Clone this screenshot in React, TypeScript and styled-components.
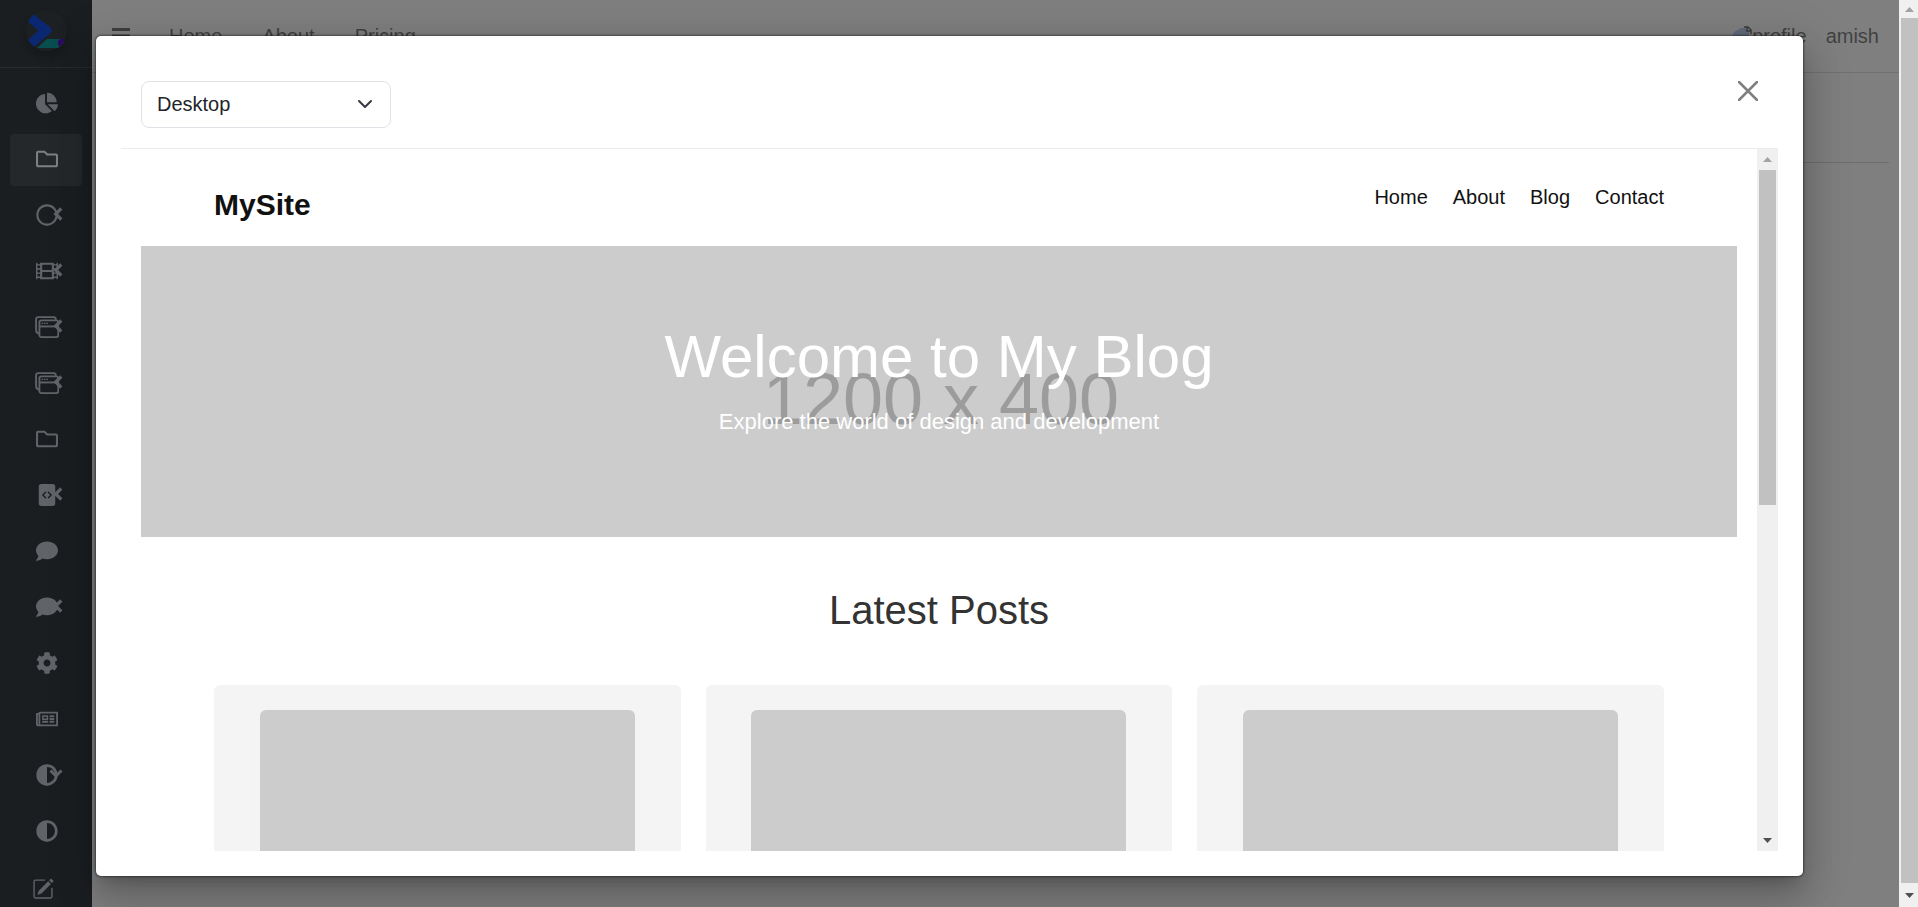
import React from "react";
import styled, { createGlobalStyle } from "styled-components";
import {
  FaAdjust,
  FaChartPie,
  FaCog,
  FaComment,
  FaFilm,
  FaRegCircle,
  FaRegFolder,
  FaRegNewspaper,
} from "react-icons/fa";
import { BsFileCodeFill, BsPencilSquare } from "react-icons/bs";

const GlobalStyle = createGlobalStyle`
  *, *::before, *::after { box-sizing: border-box; }
  body {
    margin: 0;
    background: #fff;
    color: #212529;
    font-family: "Liberation Sans", Arial, sans-serif;
    font-size: 20px;
    line-height: 30px;
  }
  h1, h2, p, ul { margin: 0; padding: 0; }
  ul { list-style: none; }
`;

const Screen = styled.div`
  display: flex;
  height: 100vh;
  overflow: hidden;
`;

const Page = styled.div`
  position: relative;
  display: flex;
  flex: 1;
  min-width: 0;
`;

const Sidebar = styled.aside`
  width: 92px;
  flex: none;
  overflow: hidden;
  background: #363d42;
`;

const Brand = styled.a`
  display: flex;
  align-items: center;
  justify-content: center;
  height: 68px;
  border-bottom: 1px solid #4b545c;
`;

const BrandDisc = styled.span`
  display: flex;
  width: 41px;
  height: 41px;
  margin-bottom: 6px;
  border-radius: 50%;
  background: #3a4045;
  box-shadow: 0 6px 12px rgba(0, 0, 0, 0.25);
`;

const SideList = styled.ul`
  display: flex;
  flex-direction: column;
  gap: 4px;
  padding: 10px;
`;

const SideLink = styled.a<{ $active?: boolean }>`
  position: relative;
  display: flex;
  align-items: center;
  justify-content: center;
  height: 52px;
  padding: 0 0 2px 2px;
  border-radius: 4px;
  color: ${(p) => (p.$active ? "#fff" : "#c2c7d0")};
  background: ${(p) => (p.$active ? "rgba(255, 255, 255, 0.1)" : "transparent")};
`;

const IconBox = styled.span`
  display: flex;

  svg {
    width: auto;
    height: 22px;
  }
`;

const Caret = styled.span`
  position: absolute;
  top: 17px;
  right: 19px;
  display: flex;
`;

const EditLink = styled.a`
  display: flex;
  justify-content: center;
  padding: 16px 6px 0 0;
  color: #c2c7d0;
`;

const Main = styled.main`
  flex: 1;
  min-width: 0;
`;

const TopBar = styled.nav`
  display: flex;
  align-items: center;
  height: 73px;
  padding: 0 20px;
  border-bottom: 1px solid #dee2e6;
  color: rgba(0, 0, 0, 0.5);
`;

const MenuButton = styled.button`
  display: flex;
  padding: 0;
  margin-right: 39px;
  border: 0;
  background: none;
  color: rgba(0, 0, 0, 0.5);
`;

const TopLinks = styled.div`
  display: flex;
  gap: 40px;
  flex: 1;
`;

const TopLink = styled.a`
  color: inherit;
  text-decoration: none;
`;

const Profile = styled.a`
  display: flex;
  align-items: center;
  color: inherit;
  text-decoration: none;
`;

const UserName = styled.span`
  margin-left: 19px;
`;

const PageRule = styled.hr`
  height: 1px;
  margin: 89px 10px 0;
  border: 0;
  background: #dcdcdc;
`;

const Backdrop = styled.div`
  position: absolute;
  inset: 0;
  display: flex;
  padding: 36px 96px 31px;
  background: rgba(0, 0, 0, 0.5);
`;

const Dialog = styled.section`
  display: flex;
  flex: 1;
  flex-direction: column;
  min-width: 0;
  padding: 25px;
  border-radius: 5px;
  background: #fff;
  box-shadow:
    0 11px 15px -7px rgba(0, 0, 0, 0.2),
    0 24px 38px 3px rgba(0, 0, 0, 0.14),
    0 9px 46px 8px rgba(0, 0, 0, 0.12),
    0 0 2px 1px rgba(0, 0, 0, 0.4);
`;

const DialogHeader = styled.header`
  display: flex;
  align-items: flex-start;
  justify-content: space-between;
  padding: 20px;
  border-bottom: 1px solid #e9ecef;
`;

const SelectWrap = styled.div`
  position: relative;
  width: 250px;
`;

const DeviceSelect = styled.select`
  display: block;
  width: 100%;
  height: 47px;
  padding: 0 45px 2px 15px;
  border: 1px solid #dee2e6;
  border-radius: 8px;
  appearance: none;
  background: #fff;
  color: #212529;
  font: inherit;
`;

const SelectArrow = styled.svg`
  position: absolute;
  top: 15px;
  right: 18px;
  width: 16px;
  height: 16px;
  pointer-events: none;
`;

const CloseButton = styled.button`
  display: flex;
  padding: 0;
  border: 0;
  background: none;
  color: #7f7f7f;
`;

const Preview = styled.div`
  display: flex;
  flex: 1;
  min-height: 0;
`;

const Site = styled.div`
  flex: 1;
  min-width: 0;
  overflow: hidden;
  padding: 0 20px;
`;

const SiteContainer = styled.div`
  max-width: 1450px;
  margin: 0 auto;
`;

const SiteHeader = styled(SiteContainer)`
  display: flex;
  align-items: flex-start;
  justify-content: space-between;
  height: 97px;
  padding-top: 33px;
  color: #111;
`;

const SiteLogo = styled.div`
  font-size: 30px;
  font-weight: 700;
  line-height: 46px;
`;

const SiteNav = styled.nav`
  display: flex;
  gap: 25px;
`;

const SiteLink = styled.a`
  color: #111;
  text-decoration: none;
`;

const Hero = styled.section`
  position: relative;
  height: 291px;
  padding-top: 75px;
  background: #ccc;
  color: #fff;
  text-align: center;
`;

const HeroImageLabel = styled.span`
  position: absolute;
  inset: 14px 0 0 4px;
  display: flex;
  align-items: center;
  justify-content: center;
  color: #9c9c9c;
  font-size: 72px;
`;

const HeroTitle = styled.h1`
  position: relative;
  margin-bottom: 12px;
  font-size: 60px;
  font-weight: 400;
  line-height: 72px;
`;

const HeroText = styled.p`
  position: relative;
  font-size: 22px;
  line-height: 34px;
`;

const PostsTitle = styled.h2`
  padding: 49px 0 51px;
  color: #333;
  font-size: 40px;
  font-weight: 400;
  line-height: 48px;
  text-align: center;
`;

const Posts = styled(SiteContainer)`
  display: grid;
  grid-template-columns: repeat(3, 1fr);
  gap: 25px;
`;

const PostCard = styled.article`
  height: 420px;
  padding: 25px;
  border-radius: 6px;
  background: #f4f4f4;
`;

const PostImage = styled.div`
  max-width: 375px;
  height: 250px;
  margin: 0 auto;
  border-radius: 6px;
  background: #ccc;
`;

const Track = styled.div<{ $width: number }>`
  display: flex;
  flex: none;
  flex-direction: column;
  width: ${(p) => p.$width}px;
  padding: 0 2px;
  background: #f0f0f0;
`;

const PageTrack = styled(Track)`
  padding-right: 0;
`;

const TrackEnd = styled.div<{ $height: number }>`
  display: flex;
  flex: none;
  align-items: center;
  justify-content: center;
  height: ${(p) => p.$height}px;
`;

const Thumb = styled.div<{ $share: number }>`
  flex: ${(p) => p.$share} 1 0;
  background: #c1c1c1;
`;

const TrackRest = styled.div<{ $share: number }>`
  flex: ${(p) => p.$share} 1 0;
`;

const UpArrow = () => (
  <svg width="9" height="5" viewBox="0 0 9 5" aria-hidden="true">
    <path d="M0 5 4.5 0 9 5Z" fill="#a3a3a3" />
  </svg>
);

const DownArrow = () => (
  <svg width="9" height="5" viewBox="0 0 9 5" aria-hidden="true">
    <path d="M0 0 4.5 5 9 0Z" fill="#505050" />
  </svg>
);

const Logo = () => (
  <svg width="41" height="41" viewBox="0 0 41 41" aria-hidden="true">
    <path
      d="M2 11.500 6.500 5Q7.500 4.300 8.500 5L24.500 17.500Q27 20.500 24.500 23L9 36Q7.500 36.800 6.500 35.500L2 30 12.500 20.500Z"
      fill="#1550e2"
    />
    <path d="M11 38 21 29H38.500Q38 33 35 35.500L32 38Z" fill="#119ba0" />
    <path d="M38.500 29Q38 33 33.500 36.500 31.500 35 31.700 32.500 32 29.500 34.500 29Z" fill="#5a10c0" />
  </svg>
);

const WindowStackIcon = () => (
  <svg width="22" height="20" viewBox="0 0 22 20" aria-hidden="true">
    <g fill="none" stroke="currentColor" strokeWidth="1.700" strokeLinejoin="round">
      <path d="M3.500 16Q1 15.500 1 13V3Q1 1 3 1H17Q19 1 19 3.500" />
      <rect x="4" y="4" width="17.200" height="15.200" rx="2" />
      <path d="M4 9.500H21" />
    </g>
    <path d="M6 6.700H12" stroke="currentColor" strokeWidth="1.200" strokeDasharray="1.400 0.800" />
  </svg>
);

const LeftCaret = () => (
  <svg width="10" height="14" viewBox="0 0 10 14" aria-hidden="true">
    <path d="M8.300 1.500 2.700 7 8.300 12.500" fill="none" stroke="currentColor" strokeWidth="3.200" />
  </svg>
);

const DownCaret = () => (
  <svg width="14" height="14" viewBox="0 0 14 14" aria-hidden="true">
    <path d="M1.500 3.500 7 9 12.500 3.500" fill="none" stroke="currentColor" strokeWidth="3" />
  </svg>
);

const BrokenImage = () => (
  <svg width="20" height="20" viewBox="0 0 20 20" aria-hidden="true">
    <path d="M0 11Q1 5 6 4 9 1 13 2L17 5V20H0Z" fill="#c3d4f5" />
    <path d="M12 1H16L19 4V8M15 1V5H19" fill="none" stroke="#777" strokeWidth="1.500" />
    <path d="M3 15Q9 5 15 14V20H3Z" fill="#379e1f" />
  </svg>
);

type SideItem = {
  label: string;
  icon: React.ComponentType;
  caret?: "left" | "down";
  active?: boolean;
};

const sideItems: SideItem[] = [
  { label: "Dashboard", icon: FaChartPie },
  { label: "Projects", icon: FaRegFolder, active: true },
  { label: "Elements", icon: FaRegCircle, caret: "left" },
  { label: "Media", icon: FaFilm, caret: "left" },
  { label: "Pages", icon: WindowStackIcon, caret: "left" },
  { label: "Templates", icon: WindowStackIcon, caret: "left" },
  { label: "Files", icon: FaRegFolder },
  { label: "Code", icon: BsFileCodeFill, caret: "left" },
  { label: "Messages", icon: FaComment },
  { label: "Comments", icon: FaComment, caret: "left" },
  { label: "Settings", icon: FaCog },
  { label: "News", icon: FaRegNewspaper },
  { label: "Themes", icon: FaAdjust, caret: "down" },
  { label: "Contrast", icon: FaAdjust },
];

export default function App() {
  return (
    <Screen>
      <GlobalStyle />
      <Page>
        <Sidebar>
          <Brand href="#" aria-label="Start page">
            <BrandDisc>
              <Logo />
            </BrandDisc>
          </Brand>
          <SideList>
            {sideItems.map(({ label, icon: Icon, caret, active }) => (
              <li key={label}>
                <SideLink href="#" aria-label={label} $active={active}>
                  <IconBox>
                    <Icon />
                  </IconBox>
                  {caret && <Caret>{caret === "left" ? <LeftCaret /> : <DownCaret />}</Caret>}
                </SideLink>
              </li>
            ))}
            <li>
              <EditLink href="#" aria-label="Edit">
                <BsPencilSquare size={22} />
              </EditLink>
            </li>
          </SideList>
        </Sidebar>
        <Main>
          <TopBar>
            <MenuButton type="button" aria-label="Toggle menu">
              <svg width="18" height="16" viewBox="0 0 18 16" aria-hidden="true">
                <path d="M0 1.500H18M0 8H18M0 14.500H18" stroke="currentColor" strokeWidth="3" />
              </svg>
            </MenuButton>
            <TopLinks>
              <TopLink href="#">Home</TopLink>
              <TopLink href="#">About</TopLink>
              <TopLink href="#">Pricing</TopLink>
            </TopLinks>
            <Profile href="#">
              <BrokenImage />
              <span>profile</span>
              <UserName>amish</UserName>
            </Profile>
          </TopBar>
          <PageRule />
        </Main>
        <Backdrop>
          <Dialog role="dialog" aria-label="Preview">
            <DialogHeader>
              <SelectWrap>
                <DeviceSelect aria-label="Device" defaultValue="Desktop">
                  <option>Desktop</option>
                </DeviceSelect>
                <SelectArrow viewBox="0 0 16 16" aria-hidden="true">
                  <path
                    d="m2 5 6 6 6-6"
                    fill="none"
                    stroke="#343a40"
                    strokeWidth="2"
                    strokeLinecap="round"
                    strokeLinejoin="round"
                  />
                </SelectArrow>
              </SelectWrap>
              <CloseButton type="button" aria-label="Close">
                <svg width="20" height="20" viewBox="0 0 20 20" aria-hidden="true">
                  <path
                    d="M1 1 19 19M19 1 1 19"
                    stroke="currentColor"
                    strokeWidth="2.500"
                    strokeLinecap="round"
                  />
                </svg>
              </CloseButton>
            </DialogHeader>
            <Preview>
              <Site>
                <SiteHeader>
                  <SiteLogo>MySite</SiteLogo>
                  <SiteNav>
                    <SiteLink href="#">Home</SiteLink>
                    <SiteLink href="#">About</SiteLink>
                    <SiteLink href="#">Blog</SiteLink>
                    <SiteLink href="#">Contact</SiteLink>
                  </SiteNav>
                </SiteHeader>
                <Hero>
                  <HeroImageLabel>1200 x 400</HeroImageLabel>
                  <HeroTitle>Welcome to My Blog</HeroTitle>
                  <HeroText>Explore the world of design and development</HeroText>
                </Hero>
                <PostsTitle>Latest Posts</PostsTitle>
                <Posts>
                  {[1, 2, 3].map((id) => (
                    <PostCard key={id}>
                      <PostImage />
                    </PostCard>
                  ))}
                </Posts>
              </Site>
              <Track $width={21} aria-hidden="true">
                <TrackEnd $height={21}>
                  <UpArrow />
                </TrackEnd>
                <Thumb $share={507} />
                <TrackRest $share={493} />
                <TrackEnd $height={21}>
                  <DownArrow />
                </TrackEnd>
              </Track>
            </Preview>
          </Dialog>
        </Backdrop>
      </Page>
      <PageTrack $width={19} aria-hidden="true">
        <TrackEnd $height={18}>
          <UpArrow />
        </TrackEnd>
        <Thumb $share={1} />
        <TrackEnd $height={24}>
          <DownArrow />
        </TrackEnd>
      </PageTrack>
    </Screen>
  );
}
